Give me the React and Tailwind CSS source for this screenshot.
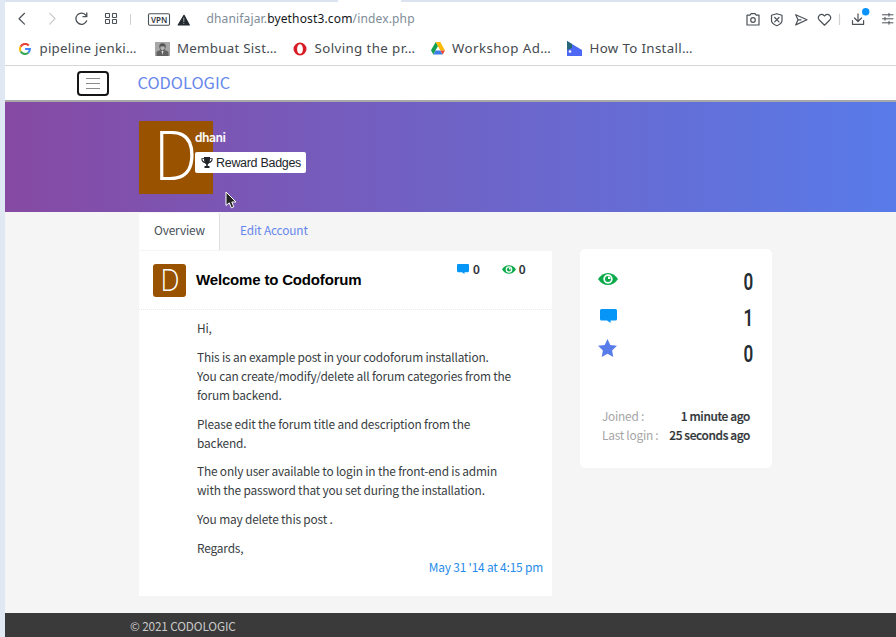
import React from "react";

const stroke = { fill: "none", stroke: "#4b5157", strokeWidth: 1.2, strokeLinecap: "round", strokeLinejoin: "round" };

const Eye = ({ className }) => (
  <svg viewBox="0 0 20 12" className={className}>
    <path d="M0 6Q4 0 10 0T20 6Q16 12 10 12T0 6Z" fill="#0bab4b" />
    <circle cx="10" cy="6" r="4.7" fill="#fff" />
    <circle cx="10" cy="6" r="3" fill="#0bab4b" />
    <path d="M10 6V3.4A2.6 2.6 0 0 1 12.6 6Z" fill="#fff" />
  </svg>
);

const Bubble = ({ className }) => (
  <svg viewBox="0 0 17 14" className={className}>
    <path d="M1.5 0H15.5A1.5 1.5 0 0 1 17 1.5V10A1.5 1.5 0 0 1 15.5 11.5H10.6V14L7 11.5H1.5A1.5 1.5 0 0 1 0 10V1.5A1.5 1.5 0 0 1 1.5 0Z" fill="#0596f7" />
  </svg>
);

const Star = () => (
  <svg viewBox="0 0 19 18" className="h-[18px] w-[19px]">
    <path d="M9.5 0L12.3 5.9L19 6.8L14.1 11.4L15.3 18L9.5 14.8L3.7 18L4.9 11.4L0 6.8L6.7 5.9Z" fill="#587deb" />
  </svg>
);

const Google = () => (
  <svg viewBox="0 0 12 12" className="h-3 w-3">
    <g fill="none" strokeWidth="2.1">
      <path d="M9.8 2.5A5 5 0 0 0 1.6 3.7" stroke="#ea4335" />
      <path d="M1.6 3.7A5 5 0 0 0 1.7 8.5" stroke="#fbbc05" />
      <path d="M1.7 8.5A5 5 0 0 0 9.3 9.7" stroke="#34a853" />
      <path d="M9.3 9.7A5 5 0 0 0 10.9 6H6.1" stroke="#4285f4" />
    </g>
  </svg>
);

const Portrait = () => (
  <svg viewBox="0 0 15 14" className="h-[14px] w-[15px]">
    <rect width="15" height="14" fill="#a7a7a7" />
    <path d="M1.5 14V10.5Q2 8.5 5.5 8.2H9.5Q13 8.5 13.5 10.5V14Z" fill="#626262" />
    <path d="M4.3 5Q4 1.2 7.5 1.2T10.8 5L9.5 8.5H5.5Z" fill="#555" />
    <path d="M5.4 4.5H9.7V6.5L7.5 8.8L5.4 6.5Z" fill="#b5b5b5" />
    <path d="M6.5 9L7.5 13L8.5 9Z" fill="#ddd" />
  </svg>
);

const OperaLogo = () => (
  <svg viewBox="0 0 14 14" className="h-[14px] w-[14px]">
    <path fillRule="evenodd" d="M7 .5A6.5 6.5 0 1 1 7 13.5A6.5 6.5 0 1 1 7 .5ZM7 2.2C5.2 2.2 4.1 4.3 4.1 7S5.2 11.8 7 11.8S9.9 9.7 9.9 7S8.8 2.2 7 2.2Z" fill="#d81c25" />
  </svg>
);

const Drive = () => (
  <svg viewBox="0 0 14 13" className="h-[13px] w-[14px]">
    <path d="M4.7 0L0 8.2L2.3 12.4L7 4Z" fill="#12a150" />
    <path d="M4.7 0H9.3L14 8.5H9.3Z" fill="#fcba05" />
    <path d="M2.3 12.5L4.7 8.5H9.3L11.7 12.5Z" fill="#3c7de6" />
    <path d="M9.3 8.5H14L11.7 12.5Z" fill="#e94335" />
  </svg>
);

const Slope = () => (
  <svg viewBox="0 0 15 15" className="h-[15px] w-[15px]">
    <path d="M0 0L15 9V15H0Z" fill="#4c68f5" />
    <path d="M0 0L5 3V7L0 9Z" fill="#276777" />
    <circle cx="3" cy="10.5" r="1.3" fill="#fff" />
  </svg>
);

const Trophy = () => (
  <svg viewBox="0 0 12 11" className="h-[11px] w-3 shrink-0">
    <path d="M3 0H9V1.2H11.7C11.7 4 10.7 5.5 8.3 5.9C7.7 6.8 6.8 7 6.8 7.5V9H8.5V11H3.5V9H5.2V7.5C5.2 7 4.3 6.8 3.7 5.9C1.3 5.5.3 4 .3 1.2H3Z" fill="#212529" />
    <path d="M1.3 2.1H3Q3 3.8 3.4 4.8Q1.6 4.3 1.3 2.1ZM10.7 2.1H9Q9 3.8 8.6 4.8Q10.4 4.3 10.7 2.1Z" fill="#fff" />
  </svg>
);

const bookmarks = [
  { icon: <Google />, label: "pipeline jenki…", box: "w-[135.5px]", gap: "gap-[8.5px]", text: "tracking-[0.25px]" },
  { icon: <Portrait />, label: "Membuat Sist…", box: "w-[138.5px]", gap: "gap-[7.5px]", text: "tracking-[0.27px]" },
  { icon: <OperaLogo />, label: "Solving the pr…", box: "w-[137.5px]", gap: "gap-[7.5px]", text: "tracking-[0.4px]" },
  { icon: <Drive />, label: "Workshop Ad…", box: "w-[136.5px]", gap: "gap-[7.5px]", text: "tracking-[0.42px]" },
  { icon: <Slope />, label: "How To Install…", box: "w-[135px]", gap: "gap-[7.5px]", text: "tracking-[0.35px]" },
];

function Browser() {
  return (
    <header className="font-['Noto_Sans',sans-serif]">
      <div className="flex h-[2px] bg-[#dbe3f0] pl-[333px]"><div className="w-[63px] bg-white" /></div>
      <div className="flex h-[33px] items-center bg-white text-[12px]">
        <svg viewBox="0 0 200 33" className="h-[33px] w-[200px] shrink-0" {...stroke}>
          <path d="M19.5 11.3L14 16.7L19.5 22.1" />
          <path d="M44.8 11.3L50 16.7L44.8 22.1" stroke="#c5c7c9" />
          <path d="M81 13.3A5.6 5.6 0 1 0 81.7 18.8M81.8 11V14.7H78" strokeWidth="1.3" />
          <g strokeWidth="1.1">
            <rect x="100.5" y="11.5" width="4" height="4" rx=".5" /><rect x="107.5" y="11.5" width="4" height="4" rx=".5" />
            <rect x="100.5" y="17.5" width="4" height="4" rx=".5" /><rect x="107.5" y="17.5" width="4" height="4" rx=".5" />
          </g>
          <path d="M125.5 12.5V22.5" stroke="#cfd1d3" strokeWidth="1" />
          <rect x="143.5" y="11.7" width="21" height="11.6" rx="1.2" strokeWidth="1.1" />
          <text x="145.9" y="20.6" textLength="16.5" fill="#30363b" stroke="none" fontSize="8" fontWeight="600">VPN</text>
          <path d="M179 13.3L184.3 23H173.2Z" fill="#23292e" stroke="#23292e" />
          <path d="M178.8 16V19.4M178.8 21.3V21.5" stroke="#9da1a4" strokeWidth="1.1" />
        </svg>
        <div className="ml-[1.5px] whitespace-nowrap leading-[33px] tracking-[0.15px] text-[#7e8c98]">dhanifajar.<span className="text-[#14181b]">byethost3.com</span>/index.php</div>
        <svg viewBox="745 2 151 33" className="ml-auto h-[33px] w-[151px] shrink-0" {...stroke}>
          <path d="M748 15.2H750L751.2 13.6H755L756.2 15.2H759V25H747V15.2Z" />
          <circle cx="753" cy="20" r="2.3" />
          <path d="M776.8 13.7L782 15.3V20.5Q782 23.7 776.8 25.7Q771.5 23.7 771.5 20.5V15.3ZM774.7 17.5L779 21.8M779 17.5L774.7 21.8" />
          <path d="M795.7 14.7L807 19.8L795.7 24.9L798 19.8ZM798 19.8H801" />
          <path d="M824.5 25.2L819.5 20.3C816.2 16.6 821.3 11.8 824.5 16C827.7 11.8 832.8 16.6 829.5 20.3Z" />
          <path d="M839.5 14V24.5" stroke="#cfd1d3" />
          <path d="M858 13.8V21.3M854.5 18L858 21.5L861.5 18M852.5 20.5V24.3H863.6V20.5" />
          <circle cx="865.7" cy="11.7" r="3.7" fill="#0a93fb" stroke="none" />
          <path d="M882.5 14.8H893M882.5 18.8H893M882.5 22.8H893M889 13.3V16.3M885 17.3V20.3M889 21.3V24.3" strokeWidth="1" />
        </svg>
      </div>
      <div className="flex h-[31px] items-center justify-start border-b border-[#d6d6d6] bg-white pb-[3px] pl-[14px] text-[13.3px] text-[#454a50]">
        {bookmarks.map((b) => (
          <div key={b.label} className={`flex shrink-0 items-center whitespace-nowrap leading-[20px] ${b.box} ${b.gap}`}>
            <span className="shrink-0">{b.icon}</span>
            <span className={`-mt-px ${b.text}`}>{b.label}</span>
          </div>
        ))}
      </div>
    </header>
  );
}

function Hero() {
  return (
    <section className="h-[110px] bg-[linear-gradient(90deg,#864aa3_0%,#587be9_100%)] pl-[134px] pt-[19px]">
      <div className="relative h-[73px] w-[74px] bg-[#985200]">
        <span className="absolute left-[14.5px] top-[-3px] origin-left scale-x-[.89] font-['Open_Sans',sans-serif] text-[69px] font-light leading-[71px] text-white">D</span>
        <div className="absolute left-[56px] top-[7px] text-[12px] font-medium leading-[18px] tracking-[-0.45px] text-white [-webkit-text-stroke:0.2px_white]">dhani</div>
        <div className="absolute left-[56px] top-[31px] flex h-[21px] w-[111px] items-center gap-[3px] whitespace-nowrap rounded-[2px] bg-white pl-[6px] font-['Liberation_Sans',sans-serif] text-[12.5px] text-[#212529]">
          <Trophy /><span className="mt-px tracking-[-0.3px]">Reward Badges</span>
        </div>
        <svg viewBox="0 0 12 18" className="absolute left-[86px] top-[70px] h-[18px] w-3">
          <path d="M1 1V14.5L4.3 11.8L6.3 16.8L8.8 15.8L6.8 11H11Z" fill="#222" stroke="#fff" />
        </svg>
      </div>
    </section>
  );
}

function Post() {
  return (
    <article className="h-[345px] w-[413px] bg-white">
      <div className="flex h-[59px] border-b border-dotted border-[#e8e8e8] pl-[14px] pt-[13px]">
        <div className="flex h-[33px] w-[33px] shrink-0 items-center justify-center rounded-[3px] bg-[#985200] text-white">
          <span className="-mt-[3px] scale-x-[.87] font-['Open_Sans',sans-serif] text-[31px] font-light leading-[33px]">D</span>
        </div>
        <h1 className="ml-[10px] w-[261px] shrink-0 whitespace-nowrap font-['Liberation_Sans',sans-serif] text-[15px] font-bold leading-[32px] tracking-[-0.17px] text-black">Welcome to Codoforum</h1>
        <div className="-mt-[5px] flex h-[20px] items-center text-[12px] font-medium text-[#24292e] [-webkit-text-stroke:0.2px_#24292e]">
          <Bubble className="mr-[4px] h-[10px] w-3" />0
          <Eye className="ml-[22px] mr-[3px] h-[9px] w-[14px]" />0
        </div>
      </div>
      <div className="flex flex-col gap-[9.35px] whitespace-nowrap pl-[58px] pt-[8px] text-[11.9px] leading-[19.2px] tracking-[-0.18px] text-[#383d42]">
        <p>Hi,</p>
        <p>This is an example post in your codoforum installation.<br />You can create/modify/delete all forum categories from the<br />forum backend.</p>
        <p>Please edit the forum title and description from the<br />backend.</p>
        <p>The only user available to login in the front-end is admin<br />with the password that you set during the installation.</p>
        <p>You may delete this post .</p>
        <p>Regards,</p>
      </div>
      <div className="whitespace-nowrap pr-[9px] text-right text-[11.9px] leading-[19px] tracking-[-0.18px] text-[#258bea]">May 31 '14 at 4:15 pm</div>
    </article>
  );
}

const numberStyle = "origin-right scale-x-[.74] font-['Roboto',sans-serif] text-[23px] font-semibold leading-[36px] text-[#242b32]";

function Stats() {
  return (
    <aside className="mt-[37px] h-[219px] w-[192px] rounded-[5px] bg-white">
      <div className="flex justify-between pl-[18px] pr-[18.5px] pt-[15px]">
        <div className="flex flex-col items-center pt-[9px]">
          <Eye className="h-3 w-5" />
          <Bubble className="mt-[24px] h-[14px] w-[17px]" />
          <div className="mr-[1.5px] mt-[16px]"><Star /></div>
        </div>
        <div className="flex flex-col pt-px text-right">
          <span className={numberStyle}>0</span><span className={numberStyle}>1</span><span className={numberStyle}>0</span>
        </div>
      </div>
      <div className="mt-[33.4px] flex flex-col pl-[22px] pr-[22px] text-[11.9px] leading-[19px] tracking-[-0.1px]">
        <div className="flex justify-between whitespace-nowrap text-[#a5a5a5]"><span className="tracking-[-0.25px]">Joined :</span><b className="font-medium tracking-[-0.37px] text-[#303437] [-webkit-text-stroke:0.2px_#303437]">1 minute ago</b></div>
        <div className="flex justify-between whitespace-nowrap text-[#a5a5a5]"><span className="tracking-[-0.25px]">Last login :</span><b className="font-medium tracking-[-0.37px] text-[#303437] [-webkit-text-stroke:0.2px_#303437]">25 seconds ago</b></div>
      </div>
    </aside>
  );
}

export default function App() {
  return (
    <div className="h-[637px] w-[896px] overflow-hidden border-l-[5px] border-[#e0e9f3] bg-[#f5f5f5] font-['Noto_Sans_CJK_SC',sans-serif]">
      <Browser />
      <nav className="flex h-[36px] items-center border-b-2 border-[#a8a8a8] bg-white pl-[72px]">
        <button className="flex h-[25px] w-[32px] flex-col items-center justify-center gap-[4px] rounded-[4px] border-2 border-[#161616]">
          <i className="h-px w-[14px] bg-[#8b8b8b]" /><i className="h-px w-[14px] bg-[#8b8b8b]" /><i className="h-px w-[14px] bg-[#8b8b8b]" />
        </button>
        <span className="-mt-[2px] ml-[28.5px] text-[16.4px] leading-[24px] text-[#6687eb]">CODOLOGIC</span>
      </nav>
      <Hero />
      <main className="flex h-[401px] pl-[134px]">
        <div className="mr-[28px]">
          <div className="flex h-[38px] pt-px text-[11.9px] leading-[34px] tracking-[-0.15px]">
            <div className="w-[81px] rounded-t-[3px] border-r border-[#dedede] bg-white pl-[15px] text-[#495057]">Overview</div>
            <div className="ml-[20px] text-[#6687eb]">Edit Account</div>
          </div>
          <div className="pt-px"><Post /></div>
        </div>
        <Stats />
      </main>
      <footer className="h-[24px] bg-[#3a3a3a] pl-[125px] text-[11.8px] leading-[26px] tracking-[-0.15px] text-[#c9c9c9]">© 2021 CODOLOGIC</footer>
    </div>
  );
}
